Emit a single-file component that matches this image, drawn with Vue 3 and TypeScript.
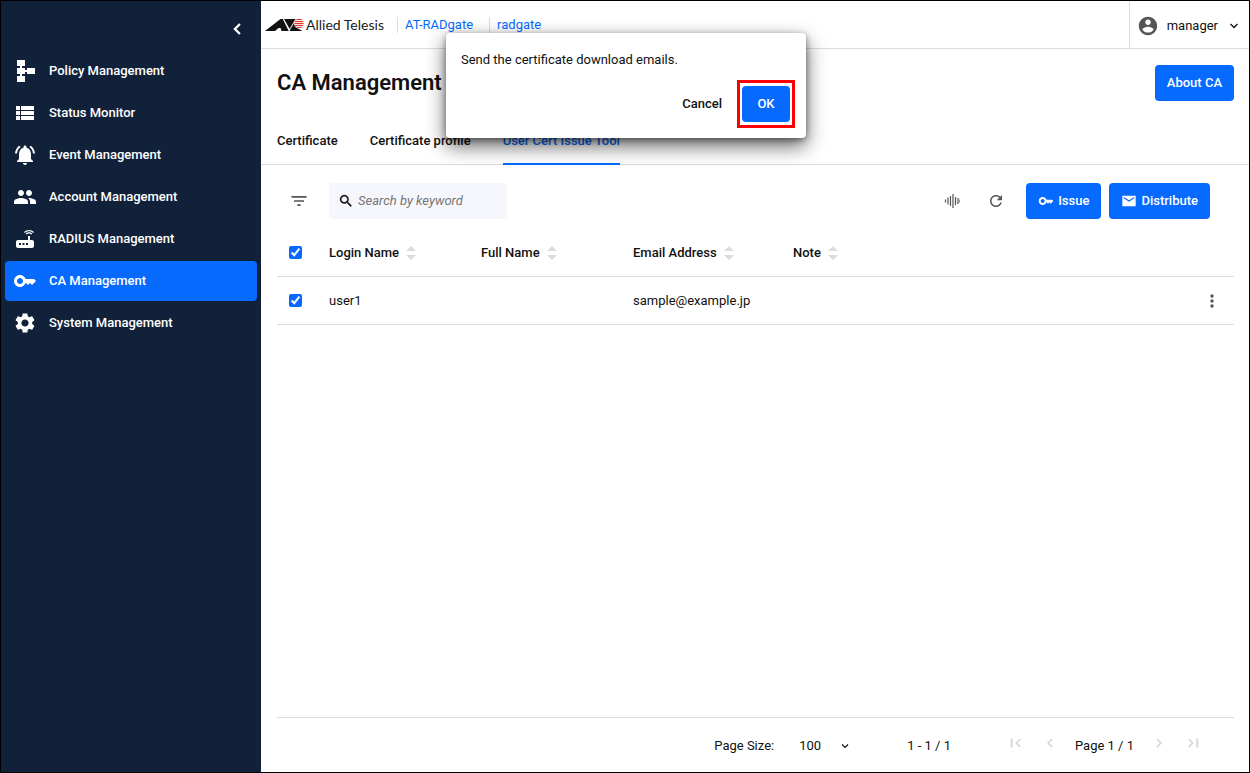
<script setup lang="ts">
import { ref } from 'vue'

interface NavItem {
  label: string
  icon: string
  active?: boolean
}

const navItems: NavItem[] = [
  { label: 'Policy Management', icon: 'M4 1h8v6H9v2h3v2h2V9h8v6h-8v-2h-2v2H9v2h3v6H4v-6h3v-2H4V9h3V7H4z' },
  { label: 'Status Monitor', icon: 'M3 14h4v-4H3v4zm0 5h4v-4H3v4zM3 9h4V5H3v4zm5 5h13v-4H8v4zm0 5h13v-4H8v4zM8 5v4h13V5H8z' },
  { label: 'Event Management', icon: 'M7.58 4.08L6.15 2.65C3.75 4.48 2.17 7.3 2.03 10.5h2c.15-2.65 1.51-4.97 3.55-6.42zm12.39 6.42h2c-.15-3.2-1.73-6.02-4.12-7.85l-1.42 1.43c2.02 1.45 3.39 3.77 3.54 6.42zM18 11c0-3.07-1.64-5.64-4.5-6.32V4c0-.83-.67-1.5-1.5-1.5s-1.5.67-1.5 1.5v.68C7.63 5.36 6 7.92 6 11v5l-2 2v1h16v-1l-2-2v-5zm-6 11c.14 0 .27-.01.4-.04.65-.14 1.18-.58 1.44-1.18.1-.24.15-.5.15-.78h-4c.01 1.1.9 2 2.01 2z' },
  { label: 'Account Management', icon: 'M16 11c1.66 0 2.99-1.34 2.99-3S17.66 5 16 5c-1.66 0-3 1.34-3 3s1.34 3 3 3zm-8 0c1.66 0 2.99-1.34 2.99-3S9.66 5 8 5C6.34 5 5 6.34 5 8s1.34 3 3 3zm0 2c-2.33 0-7 1.17-7 3.5V19h14v-2.5c0-2.33-4.67-3.5-7-3.5zm8 0c-.29 0-.62.02-.97.05 1.16.84 1.97 1.97 1.97 3.45V19h6v-2.5c0-2.33-4.67-3.5-7-3.5z' },
  { label: 'RADIUS Management', icon: 'M20.2 5.9l.8-.8C19.6 3.7 17.8 3 16 3s-3.6.7-5 2.1l.8.8C13 4.8 14.5 4.2 16 4.2s3 .6 4.2 1.7zm-.9.8c-.9-.9-2.1-1.4-3.3-1.4s-2.4.5-3.3 1.4l.8.8c.7-.7 1.6-1 2.5-1 .9 0 1.8.3 2.5 1l.8-.8zM19 13h-2V9h-2v4H5c-1.1 0-2 .9-2 2v4c0 1.1.9 2 2 2h14c1.1 0 2-.9 2-2v-4c0-1.1-.9-2-2-2zM8 18H6v-2h2v2zm3.5 0h-2v-2h2v2zm3.5 0h-2v-2h2v2z' },
  { label: 'CA Management', icon: 'M21 10h-8.35C11.83 7.67 9.61 6 7 6c-3.31 0-6 2.69-6 6s2.69 6 6 6c2.61 0 4.83-1.67 5.65-4H13l2 2 2-2 2 2 4-4.04L21 10zM7 15c-1.65 0-3-1.35-3-3s1.35-3 3-3 3 1.35 3 3-1.35 3-3 3z', active: true },
  { label: 'System Management', icon: 'M19.14 12.94c.04-.3.06-.61.06-.94 0-.32-.02-.64-.07-.94l2.03-1.58c.18-.14.23-.41.12-.61l-1.92-3.32c-.12-.22-.37-.29-.59-.22l-2.39.96c-.5-.38-1.03-.7-1.62-.94l-.36-2.54c-.04-.24-.24-.41-.48-.41h-3.84c-.24 0-.43.17-.47.41l-.36 2.54c-.59.24-1.13.57-1.62.94l-2.39-.96c-.22-.08-.47 0-.59.22L2.74 8.87c-.12.21-.08.47.12.61l2.03 1.58c-.05.3-.09.63-.09.94s.02.64.07.94l-2.03 1.58c-.18.14-.23.41-.12.61l1.92 3.32c.12.22.37.29.59.22l2.39-.96c.5.38 1.03.7 1.62.94l.36 2.54c.05.24.24.41.48.41h3.84c.24 0 .44-.17.47-.41l.36-2.54c.59-.24 1.13-.56 1.62-.94l2.39.96c.22.08.47 0 .59-.22l1.92-3.32c.12-.22.07-.47-.12-.61l-2.01-1.58zM12 15.6c-1.98 0-3.6-1.62-3.6-3.6s1.62-3.6 3.6-3.6 3.6 1.62 3.6 3.6-1.62 3.6-3.6 3.6z' },
]

const tabs = ['Certificate', 'Certificate profile', 'User Cert Issue Tool']
const activeTab = ref(2)

const columns = ['Login Name', 'Full Name', 'Email Address', 'Note']
const users = ref([{ login: 'user1', fullName: '', email: 'sample@example.jp', note: '', selected: true }])
const allSelected = ref(true)
const keyword = ref('')
const pageSize = ref('100')
const dialogOpen = ref(true)
</script>

<template>
  <div class="app">
    <aside class="sidebar">
      <div class="sidebar-top">
        <button class="icon-btn collapse" type="button" aria-label="Collapse menu">
          <svg width="20" height="20" viewBox="0 0 24 24"><path d="M15.500 6L9.500 12l6 6" fill="none" stroke="currentColor" stroke-width="2.800" /></svg>
        </button>
      </div>
      <nav class="nav">
        <a v-for="item in navItems" :key="item.label" href="#" class="nav-item" :class="{ active: item.active }">
          <svg width="24" height="24" viewBox="0 0 24 24"><path :d="item.icon" fill="currentColor" /></svg>
          <span>{{ item.label }}</span>
        </a>
      </nav>
    </aside>

    <main class="main">
      <header class="topbar">
        <div class="logo">
          <svg width="39" height="14" viewBox="0 0 39 14">
            <path d="M0 13L15.500 1H18l6 12h-7.500l-1-3h-2L10 13z" fill="#111" />
            <path d="M19 1h12l-6 10.500z" fill="#111" />
            <path d="M18.500 1.500l5.500 11L30.500 1.500" fill="none" stroke="#fff" stroke-width="0.800" />
            <path d="M24.500 13L30 3.500l1 6 6.500 3.500z" fill="#111" />
            <circle cx="34" cy="5.500" r="5" fill="#fbe3df" />
            <path d="M31.500 1.500h5M30 3.500h8M29.500 5.500h9M30 7.500h8M31.500 9.500h5" stroke="#dc3c2e" stroke-width="1" />
          </svg>
          <span class="brand">Allied Telesis</span>
        </div>
        <a href="#" class="crumb">AT-RADgate</a>
        <a href="#" class="crumb">radgate</a>
        <button class="account" type="button">
          <svg width="22" height="22" viewBox="0 0 24 24"><path d="M12 2C6.480 2 2 6.480 2 12s4.480 10 10 10 10-4.480 10-10S17.520 2 12 2zm0 3c1.660 0 3 1.340 3 3s-1.340 3-3 3-3-1.340-3-3 1.340-3 3-3zm0 14.200c-2.500 0-4.710-1.280-6-3.220.03-1.990 4-3.080 6-3.080 1.990 0 5.970 1.090 6 3.080-1.290 1.940-3.500 3.220-6 3.220z" fill="#555" /></svg>
          <span>manager</span>
          <svg width="10" height="10" viewBox="0 0 10 10"><path d="M1.500 3L5 6.500 8.500 3" fill="none" stroke="currentColor" stroke-width="1.300" /></svg>
        </button>
      </header>

      <div class="title-row">
        <h1>CA Management</h1>
        <button class="btn primary" type="button">About CA</button>
      </div>

      <div class="tabs" role="tablist">
        <button
          v-for="(tab, i) in tabs"
          :key="tab"
          class="tab"
          type="button"
          role="tab"
          :aria-selected="activeTab === i"
          :class="{ active: activeTab === i }"
          @click="activeTab = i"
        >{{ tab }}</button>
      </div>

      <section class="content">
        <div class="toolbar">
          <button class="icon-btn filter" type="button" aria-label="Filter">
            <svg width="20" height="20" viewBox="0 0 24 24"><path d="M10 18h4v-2h-4v2zM3 6v2h18V6H3zm3 7h12v-2H6v2z" fill="currentColor" /></svg>
          </button>
          <label class="search">
            <svg width="16" height="16" viewBox="0 0 24 24"><path d="M15.500 14h-.79l-.28-.27C15.410 12.590 16 11.110 16 9.500 16 5.910 13.090 3 9.500 3S3 5.910 3 9.500 5.910 16 9.500 16c1.610 0 3.090-.59 4.230-1.570l.27.28v.79l5 4.990L20.490 19l-4.990-5zm-6 0C7.010 14 5 11.990 5 9.500S7.010 5 9.500 5 14 7.010 14 9.500 11.990 14 9.500 14z" fill="currentColor" stroke="currentColor" stroke-width="0.500" /></svg>
            <input v-model="keyword" type="text" placeholder="Search by keyword" aria-label="Search by keyword" />
          </label>
          <div class="actions">
            <button class="icon-btn" type="button" aria-label="Adjust column widths">
              <svg width="16" height="16" viewBox="0 0 16 16"><path d="M1.500 6.500v3M4 4.500v7M6.500 3v10M9 1v14M11.500 4v8M14 5v6M16 6.500v3" fill="none" stroke="currentColor" stroke-width="1.200" /></svg>
            </button>
            <button class="icon-btn" type="button" aria-label="Reload">
              <svg width="18" height="18" viewBox="0 0 24 24"><path d="M17.650 6.350C16.200 4.900 14.210 4 12 4c-4.420 0-7.990 3.580-7.990 8s3.570 8 7.990 8c3.730 0 6.840-2.550 7.730-6h-2.080c-.82 2.330-3.040 4-5.650 4-3.310 0-6-2.690-6-6s2.690-6 6-6c1.660 0 3.140.69 4.220 1.780L13 11h7V4l-2.350 2.350z" fill="currentColor" /></svg>
            </button>
            <button class="btn primary with-icon" type="button">
              <svg width="16" height="16" viewBox="0 0 24 24"><path :d="navItems[5].icon" fill="currentColor" /></svg>
              Issue
            </button>
            <button class="btn primary with-icon" type="button" @click="dialogOpen = true">
              <svg width="16" height="16" viewBox="0 0 24 24"><path d="M22 4H2v16h20V4zm-2 4l-8 5-8-5V6l8 5 8-5v2z" fill="currentColor" /></svg>
              Distribute
            </button>
          </div>
        </div>

        <table class="grid">
          <colgroup>
            <col class="c-check" /><col class="c-name" /><col class="c-name" /><col class="c-mail" /><col /><col class="c-menu" />
          </colgroup>
          <thead>
            <tr>
              <th class="check"><input v-model="allSelected" type="checkbox" aria-label="Select all" /></th>
              <th v-for="col in columns" :key="col">
                <span class="head">{{ col }}
                  <svg width="10" height="14" viewBox="0 0 10 14"><path d="M5 0l5 5H0zM5 14l5-5H0z" fill="#dcdcdc" /></svg>
                </span>
              </th>
              <th></th>
            </tr>
          </thead>
          <tbody>
            <tr v-for="user in users" :key="user.login">
              <td class="check"><input v-model="user.selected" type="checkbox" :aria-label="`Select ${user.login}`" /></td>
              <td>{{ user.login }}</td>
              <td>{{ user.fullName }}</td>
              <td>{{ user.email }}</td>
              <td>{{ user.note }}</td>
              <td class="menu">
                <button class="icon-btn" type="button" aria-label="Row actions">
                  <svg width="20" height="20" viewBox="0 0 20 20" fill="currentColor"><circle cx="10" cy="5" r="1.700" /><circle cx="10" cy="10" r="1.700" /><circle cx="10" cy="15" r="1.700" /></svg>
                </button>
              </td>
            </tr>
          </tbody>
        </table>

        <footer class="pager">
          <label for="page-size">Page Size:</label>
          <div class="select-wrap">
            <select id="page-size" v-model="pageSize">
              <option>50</option>
              <option>100</option>
              <option>200</option>
            </select>
            <svg width="8" height="8" viewBox="0 0 8 8"><path d="M1 2.500L4 5.500 7 2.500" fill="none" stroke="currentColor" stroke-width="1.200" /></svg>
          </div>
          <span class="range">1 - 1 / 1</span>
          <div class="pages">
            <button class="icon-btn" type="button" disabled aria-label="First page">
              <svg width="18" height="18" viewBox="0 0 24 24"><path d="M18.410 16.590L13.820 12l4.590-4.590L17 6l-6 6 6 6zM5 6h2.500v12H5z" fill="currentColor" /></svg>
            </button>
            <button class="icon-btn" type="button" disabled aria-label="Previous page">
              <svg width="18" height="18" viewBox="0 0 24 24"><path d="M15.500 7.410L14.100 6l-6 6 6 6 1.400-1.410L10.900 12z" fill="currentColor" /></svg>
            </button>
            <span class="page">Page 1 / 1</span>
            <button class="icon-btn" type="button" disabled aria-label="Next page">
              <svg width="18" height="18" viewBox="0 0 24 24"><path d="M10 6L8.590 7.410 13.170 12l-4.580 4.590L10 18l6-6z" fill="currentColor" /></svg>
            </button>
            <button class="icon-btn" type="button" disabled aria-label="Last page">
              <svg width="18" height="18" viewBox="0 0 24 24"><path d="M5.590 7.410L10.180 12l-4.590 4.590L7 18l6-6-6-6zM16.500 6H19v12h-2.500z" fill="currentColor" /></svg>
            </button>
          </div>
        </footer>
      </section>
    </main>

    <div v-if="dialogOpen" class="dialog" role="dialog" aria-labelledby="dialog-text">
      <p id="dialog-text">Send the certificate download emails.</p>
      <div class="dialog-actions">
        <button class="btn plain" type="button" @click="dialogOpen = false">Cancel</button>
        <button class="btn primary ok" type="button" @click="dialogOpen = false">OK</button>
      </div>
    </div>
  </div>
</template>

<style>
body {
  margin: 0;
}
</style>

<style scoped>
.app {
  position: relative;
  box-sizing: border-box;
  display: flex;
  min-height: 100vh;
  border: 1px solid #000;
  background: #fff;
  color: #111;
  font: 400 13px/20px Roboto, "Liberation Sans", sans-serif;
}
.app *,
.app *::after {
  box-sizing: border-box;
}
svg {
  display: block;
  flex: none;
}
button,
input,
select {
  font: inherit;
  color: inherit;
}
button {
  padding: 0;
  border: 0;
  background: none;
  cursor: pointer;
}
a {
  text-decoration: none;
}

.sidebar {
  flex: 0 0 260px;
  background: #12213a;
  color: #fff;
}
.sidebar-top {
  display: flex;
  align-items: center;
  justify-content: flex-end;
  height: 50px;
  padding: 6px 14px 0 0;
}
.nav {
  display: flex;
  flex-direction: column;
  gap: 2px;
  padding: 0 4px;
}
.nav-item {
  display: flex;
  align-items: center;
  gap: 12px;
  height: 40px;
  padding: 0 8px;
  border-radius: 4px;
  color: #fff;
  font-weight: 500;
}
.nav-item.active {
  background: #066aff;
}

.main {
  display: flex;
  flex: 1;
  flex-direction: column;
  min-width: 0;
}
.topbar {
  display: flex;
  align-items: center;
  height: 48px;
  border-bottom: 1px solid #dcdcdc;
}
.logo {
  display: flex;
  flex: 0 0 120px;
  align-items: center;
  gap: 2px;
  margin: 0 12px 0 4px;
  white-space: nowrap;
}
.brand {
  font: 400 14px/20px Lato, sans-serif;
  color: #222;
}
.crumb {
  height: 16px;
  padding: 0 16px 0 7px;
  border-left: 1px solid #dcdcdc;
  color: #066aff;
  line-height: 16px;
}
.account {
  display: flex;
  align-items: center;
  align-self: stretch;
  gap: 8px;
  margin-left: auto;
  padding: 2px 10px 0 7px;
  border-left: 1px solid #dcdcdc;
}
.account svg:last-child {
  margin-left: 3px;
}

.title-row {
  display: flex;
  align-items: center;
  justify-content: space-between;
  padding: 16px 15px 16px 16px;
}
h1 {
  margin: 0;
  font-size: 22px;
  line-height: 36px;
  font-weight: 600;
}
.btn {
  height: 36px;
  border-radius: 4px;
  font-weight: 500;
}
.primary {
  padding: 0 12px;
  background: #066aff;
  color: #fff;
}
.with-icon {
  display: flex;
  align-items: center;
  gap: 4px;
}

.tabs {
  display: flex;
  gap: 32px;
  height: 48px;
  padding: 0 16px;
  border-bottom: 1px solid #dcdcdc;
}
.tab {
  height: 48px;
  border-top: 2px solid transparent;
  border-bottom: 2px solid transparent;
  font-weight: 500;
}
.tab.active {
  border-bottom-color: #066aff;
  color: #066aff;
}

.content {
  display: flex;
  flex: 1;
  flex-direction: column;
  padding: 18px 15px 0 16px;
}
.toolbar {
  display: flex;
  align-items: center;
  margin-bottom: 10px;
}
.icon-btn {
  display: grid;
  place-items: center;
  width: 20px;
  height: 20px;
  color: #555;
}
.collapse {
  color: #fff;
}
.filter {
  margin: 0 20px 0 12px;
}
.search {
  display: flex;
  align-items: center;
  gap: 4px;
  width: 178px;
  height: 36px;
  padding: 0 9px;
  border-radius: 2px;
  background: #f6f7fc;
}
.search input {
  width: 100%;
  min-width: 0;
  padding: 0;
  border: 0;
  outline: 0;
  background: none;
}
.search input::placeholder {
  color: #757575;
  font-style: italic;
}
.actions {
  display: flex;
  align-items: center;
  gap: 24px;
  margin-left: auto;
  padding-right: 24px;
}
.actions .btn:nth-last-child(2) {
  margin-right: -16px;
}
.actions .icon-btn + .btn {
  margin-left: -4px;
}

.grid {
  width: 100%;
  table-layout: fixed;
  border-collapse: separate;
  border-spacing: 0;
}
.c-check {
  width: 52px;
}
.c-name {
  width: 152px;
}
.c-mail {
  width: 160px;
}
.c-menu {
  width: 44px;
}
th,
td {
  height: 48px;
  padding: 0;
  border-bottom: 1px solid #dcdcdc;
  text-align: left;
}
th {
  font-weight: 500;
}
.head {
  display: flex;
  align-items: center;
  gap: 7px;
}
.check {
  padding-left: 12px;
}
.check input {
  display: block;
  width: 13px;
  height: 13px;
  margin: 0;
  accent-color: #066aff;
}
.menu .icon-btn {
  margin-left: 12px;
}

.pager {
  display: flex;
  align-items: center;
  justify-content: flex-end;
  height: 55px;
  margin-top: auto;
  padding: 2px 31px 0 0;
  border-top: 1px solid #dcdcdc;
}
.select-wrap {
  display: flex;
  align-items: center;
  margin: 0 58px 0 25px;
}
.select-wrap select {
  width: 42px;
  padding: 0;
  border: 0;
  background: none;
  appearance: none;
}
.pages {
  display: flex;
  align-items: center;
  gap: 14px;
  margin-left: 55px;
}
.pages .icon-btn {
  margin-bottom: 6px;
  color: #d5d5d5;
}
.page {
  margin: 0 1px;
}

.dialog {
  position: absolute;
  top: 32px;
  left: 50%;
  width: 360px;
  margin-left: -179px;
  padding: 17px 16px 16px 15px;
  border-radius: 4px;
  background: #fff;
  box-shadow: 0 8px 20px rgba(0, 0, 0, 0.6), 0 2px 6px rgba(0, 0, 0, 0.4);
}
.dialog p {
  margin: 0 0 16px;
}
.dialog-actions {
  display: flex;
  justify-content: flex-end;
  gap: 20px;
}
.ok {
  position: relative;
  min-width: 48px;
}
.ok::after {
  position: absolute;
  inset: -6px -5px;
  border: 3px solid #f00;
  content: "";
}
</style>
